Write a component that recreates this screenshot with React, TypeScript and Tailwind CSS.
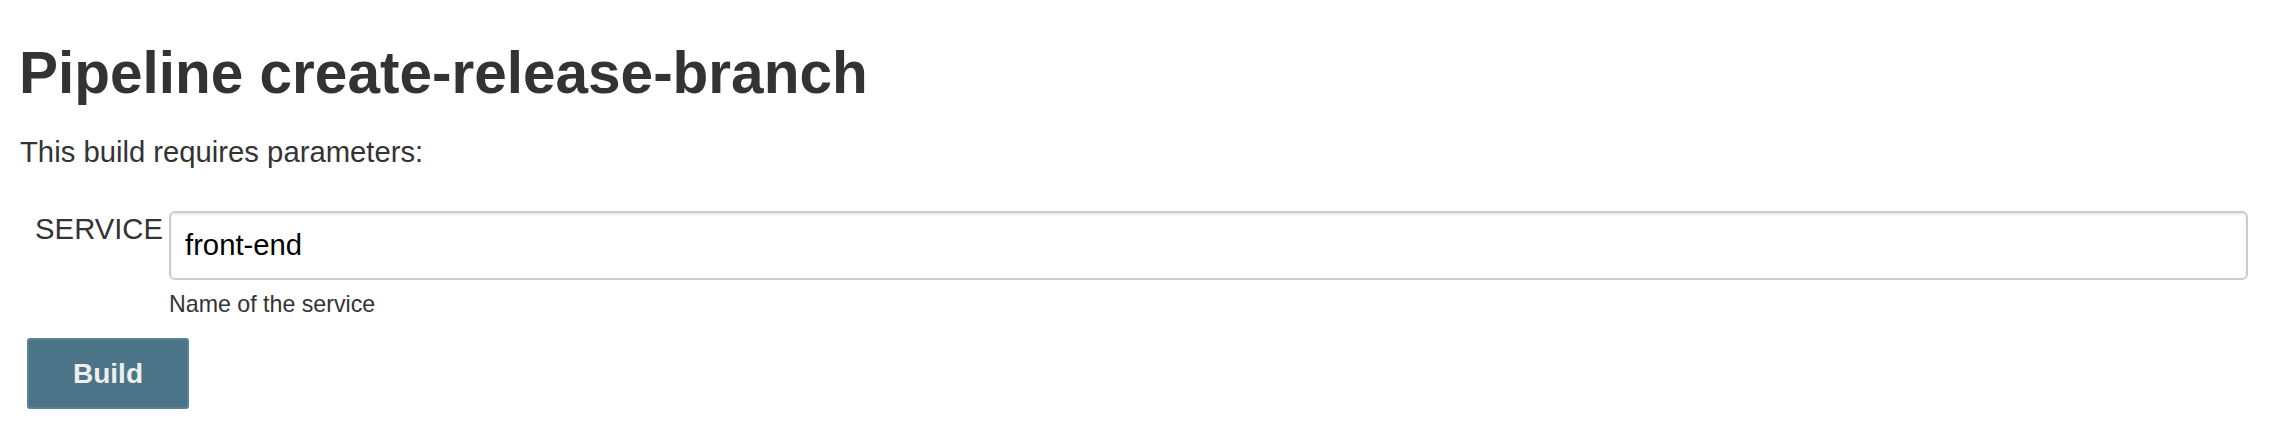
export default function App() {
  return (
    <div className="min-h-[435px] bg-white pl-[19px] pr-[24px] pt-[40px] font-['Liberation_Sans',Arial,sans-serif] text-[#333]">
      <h1 className="text-[58.5px] font-bold leading-[66px]">Pipeline create-release-branch</h1>
      <p className="mt-[28px] pl-[1px] text-[29.25px] leading-[36px]">This build requires parameters:</p>

      <form className="mt-[41px]" onSubmit={(e) => e.preventDefault()}>
        <div className="flex items-start">
          <label htmlFor="service" className="w-[150px] shrink-0 pr-[6px] text-right text-[29.25px] leading-[36px]">
            SERVICE
          </label>
          <div className="flex-1">
            <input
              id="service"
              defaultValue="front-end"
              className="block h-[69px] w-full rounded-[6px] border-2 border-[#cccccc] bg-white px-[14px] text-[29.25px] text-black shadow-[inset_0_2px_2px_rgba(0,0,0,0.075)] outline-none"
            />
            <div className="mt-[10px] text-[23.2px] leading-[28px]">Name of the service</div>
          </div>
        </div>

        <button
          type="submit"
          className="ml-[8px] mt-[20px] flex h-[71px] w-[162px] items-center justify-center rounded-[3px] border-2 border-[#5b8297] bg-[#4c7489] text-[28px] font-bold text-[#eeeeee]"
        >
          Build
        </button>
      </form>
    </div>
  )
}
